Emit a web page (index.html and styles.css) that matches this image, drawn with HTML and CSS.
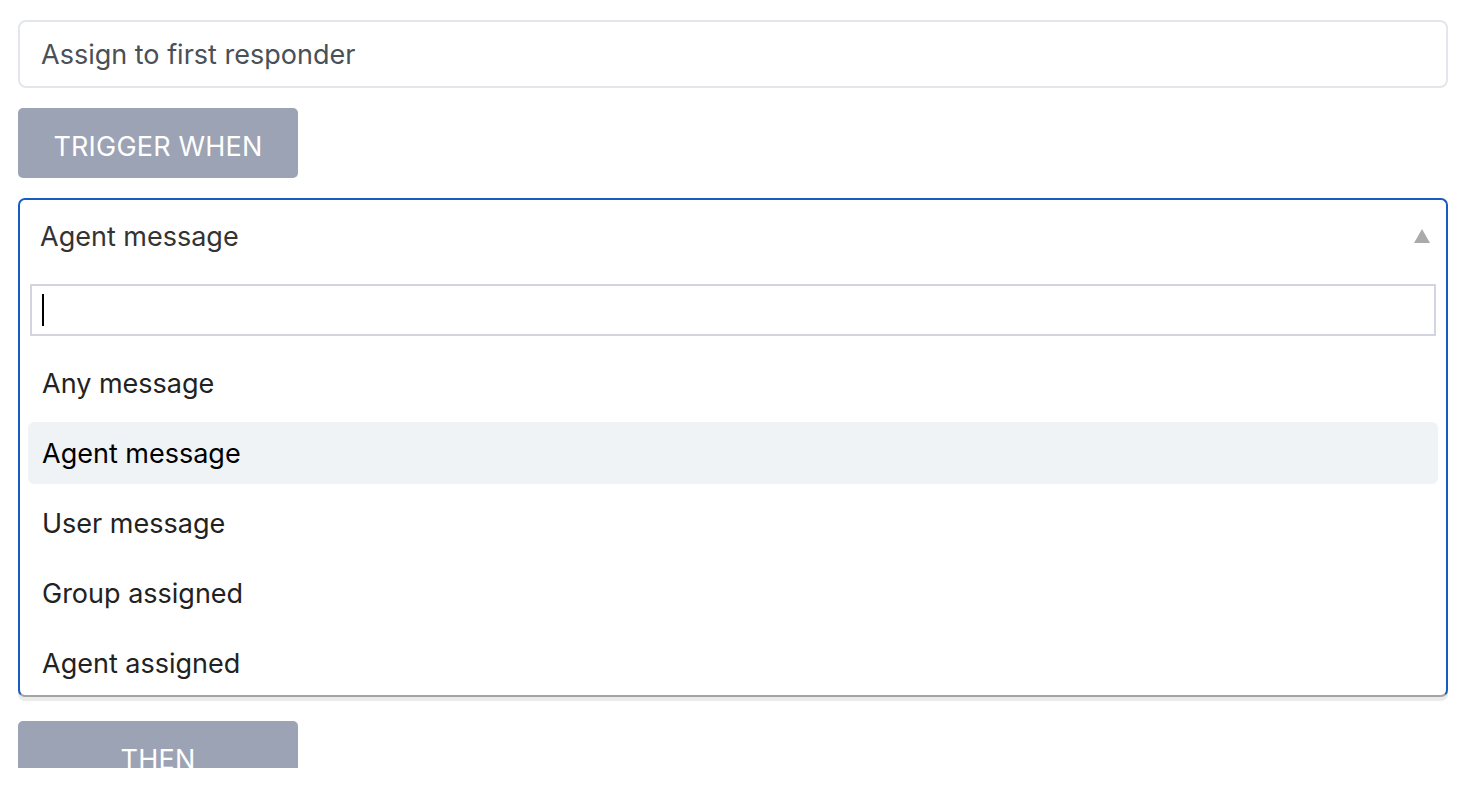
FILE: index.html
```html
<!DOCTYPE html>
<html>
<head>
<meta charset="utf-8">
<link rel="stylesheet" href="styles.css">
</head>
<body>
<div class="page">
  <input class="name-input" type="text" value="Assign to first responder">
  <div class="section-btn">TRIGGER WHEN</div>
  <div class="select">
    <div class="select-head">
      <span class="select-value">Agent message</span>
      <span class="caret"></span>
    </div>
    <div class="search"><span class="cursor"></span></div>
    <ul class="options">
      <li class="option">Any message</li>
      <li class="option active">Agent message</li>
      <li class="option">User message</li>
      <li class="option">Group assigned</li>
      <li class="option">Agent assigned</li>
    </ul>
  </div>
  <div class="section-btn then">THEN</div>
</div>
</body>
</html>
```
FILE: styles.css
```css
* { box-sizing: border-box; }
html, body { margin: 0; padding: 0; background: #fff; }
body {
  font-family: Inter, "Noto Sans", "Liberation Sans", sans-serif;
  height: 768px;
  overflow: hidden;
}
.page {
  width: 1430px;
  margin-left: 18px;
  padding-top: 20px;
  display: flex;
  flex-direction: column;
  align-items: flex-start;
}
.name-input {
  width: 100%;
  height: 68px;
  border: 2px solid #e3e6ea;
  border-radius: 8px;
  padding: 0 21px;
  font: inherit;
  font-size: 27px;
  color: #495057;
  outline: none;
  background: #fff;
}
.section-btn {
  margin-top: 20px;
  width: 280px;
  height: 70px;
  border-radius: 5px;
  background: #9ca3b4;
  color: #fff;
  font-size: 27px;
  letter-spacing: 0.2px;
  display: flex;
  align-items: center;
  justify-content: center;
  padding-top: 6px;
  flex-shrink: 0;
}
.section-btn.then { margin-top: 24px; }
.select {
  margin-top: 20px;
  width: 100%;
  border: 2px solid #1a5bbf;
  border-bottom-color: #a3a3a3;
  border-radius: 7px;
  box-shadow: 0 4px 0 0 #ebebeb;
  background: #fff;
}
.select-head {
  height: 72px;
  display: flex;
  align-items: center;
  justify-content: space-between;
  padding: 0 16px 0 20px;
}
.select-value { font-size: 27px; color: #333; }
.caret {
  width: 0; height: 0;
  border-left: 8px solid transparent;
  border-right: 8px solid transparent;
  border-bottom: 14px solid #aaa;
  margin-top: -1px;
}
.search {
  margin: 12px 10px 0;
  height: 52px;
  border: 2px solid #d2d5e0;
  display: flex;
  align-items: center;
  padding-left: 10px;
}
.cursor { width: 2px; height: 32px; background: #000; }
.options {
  list-style: none;
  margin: 0;
  padding: 16px 8px 1px;
  display: flex;
  flex-direction: column;
  gap: 8px;
}
.option {
  height: 62px;
  display: flex;
  align-items: center;
  padding-left: 14px;
  font-size: 27px;
  color: #222;
  border-radius: 6px;
}
.option.active { background: #f0f3f6; color: #000; }
```
